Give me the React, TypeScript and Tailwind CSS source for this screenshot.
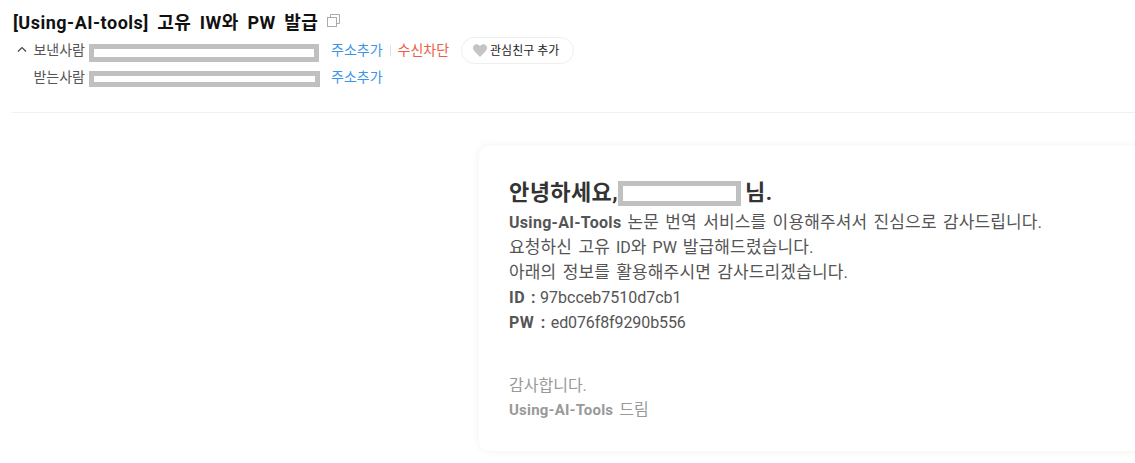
const font = { fontFamily: 'Roboto, "Noto Sans CJK KR", sans-serif' };

const Redacted = ({ className }: { className: string }) => (
  <span className={`inline-block bg-white border-solid border-[#c0c0c0] ${className}`} />
);

const Ko = ({ children }: { children: React.ReactNode }) => <span className="text-[17px] tracking-[0.13px]">{children}</span>;

const HeaderRow = ({ label, toggle, children }: { label: string; toggle?: boolean; children: React.ReactNode }) => (
  <div className="flex items-center h-[27px] text-[14px]">
    <span className="w-[21px] pl-[5px]">
      {toggle && (
        <svg width="10" height="7" viewBox="0 0 10 7" fill="none" stroke="#444" strokeWidth="1.2" className="mb-[3px]">
          <path d="M1 5.5 5 1.5 9 5.5" />
        </svg>
      )}
    </span>
    <span className="w-[56px] pr-[4px] text-right text-[#555]">{label}</span>
    {children}
  </div>
);

export default function App() {
  return (
    <div className="w-[1135px] h-[463px] overflow-hidden bg-white" style={font}>
      <div className="ml-[12px] h-[113px] border-b border-[#f1f1f1] pt-[11px]">
        <div className="flex items-center h-[24px] pl-[1px]">
          <h1 className="text-[18px] leading-[24px] font-bold text-[#111] tracking-[0.5px] [word-spacing:3.5px]">[Using-AI-tools] 고유 IW와 PW 발급</h1>
          <svg width="13" height="13" viewBox="0 0 13 13" fill="none" stroke="#aaa" className="ml-[9px] mb-[5px]">
            <path d="M3.5 3.5V0.5H12.5V9.5H9.5" />
            <rect x="0.5" y="3.5" width="9" height="9" />
          </svg>
        </div>
        <div className="mt-[2px]">
          <HeaderRow label="보낸사람" toggle>
            <Redacted className="w-[230px] h-[18px] mt-[5px] border-[5px]" />
            <a className="ml-[12px] text-[#3d95e8]">주소추가</a>
            <span className="mx-[7px] h-[11px] w-px bg-[#e2e2e2]" />
            <a className="text-[#ee5c41]">수신차단</a>
            <button className="ml-[12px] flex items-center h-[27px] w-[113px] rounded-full border border-[#eeeeee] pl-[11px] text-[12px] text-[#222]">
              <svg width="14" height="13" viewBox="0 0 24 22" fill="#c4c4c4" className="mr-[3px]">
                <path d="M12 22 2.4 12.2C-.8 8.9-.8 4.8 1.6 2.3 4.2-.4 8.8-.3 12 3.6 15.2-.3 19.8-.4 22.4 2.3c2.4 2.5 2.4 6.6-.8 9.9z" />
              </svg>
              관심친구 추가
            </button>
          </HeaderRow>
          <HeaderRow label="받는사람">
            <Redacted className="w-[231px] h-[16px] mt-[3px] border-[5px]" />
            <a className="ml-[11px] text-[#3d95e8]">주소추가</a>
          </HeaderRow>
        </div>
      </div>
      <div className="ml-[479px] mt-[33px] w-[720px] h-[305px] rounded-[10px] bg-white shadow-[0_0_10px_rgba(0,0,0,0.06)] pl-[30px] pt-[32px]">
        <div className="flex items-center h-[28px] text-[22px] font-bold text-[#333] tracking-[0.4px]">
          안녕하세요,
          <Redacted className="w-[123px] h-[25px] mt-[3px] border-[5px]" />
          <span className="ml-[4px]">님.</span>
        </div>
        <div className="mt-[4px] text-[16px] leading-[25px] text-[#555]">
          <p className="[word-spacing:2px]"><b className="tracking-[0.3px]">Using-AI-Tools</b> <Ko>논문 번역 서비스를 이용해주셔서 진심으로 감사드립니다.</Ko></p>
          <p className="[word-spacing:2px]"><Ko>요청하신 고유</Ko> ID<Ko>와</Ko> PW <Ko>발급해드렸습니다.</Ko></p>
          <p className="[word-spacing:2px]"><Ko>아래의 정보를 활용해주시면 감사드리겠습니다.</Ko></p>
          <p><b className="tracking-[0.5px] [word-spacing:1.5px]">ID :</b> 97bcceb7510d7cb1</p>
          <p><b className="tracking-[0.5px] [word-spacing:2px]">PW :</b> <span className="ml-[1px] tracking-[-0.1px]">ed076f8f9290b556</span></p>
        </div>
        <div className="mt-[39px] text-[16px] leading-[24px] text-[#999]">
          <p>감사합니다.</p>
          <p><b className="text-[15px] tracking-[0.2px]">Using-AI-Tools</b> <span className="ml-[2px]">드림</span></p>
        </div>
      </div>
    </div>
  );
}
